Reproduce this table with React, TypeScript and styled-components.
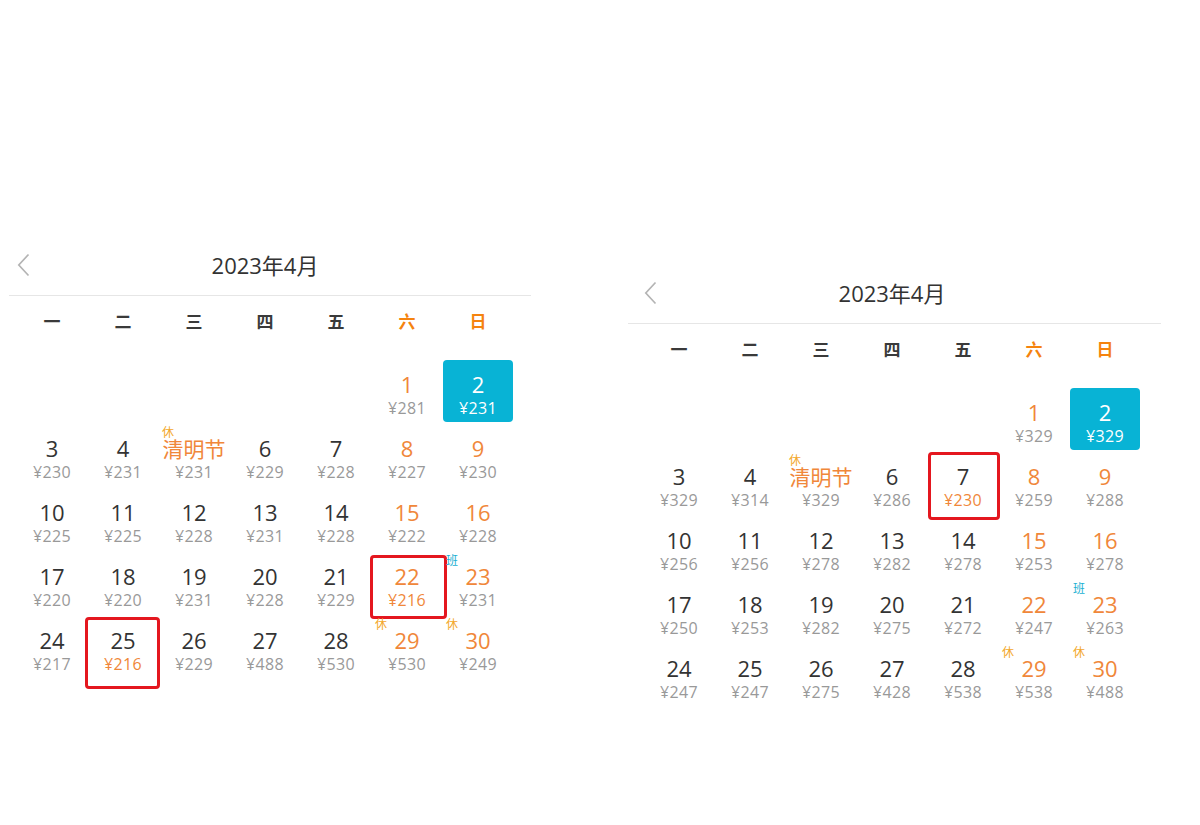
import React from "react";
import styled, { createGlobalStyle } from "styled-components";

const Global = createGlobalStyle`
  html, body { margin: 0; padding: 0; background: #ffffff; }
  body { font-family: "Open Sans", "Noto Sans CJK SC", sans-serif; }
`;

const ORANGE = "#f0873a";
const GRAY = "#999999";
const DARK = "#333333";
const CYAN = "#08b3d5";

type Mark = { top: number; left: number; right: number; bottom: number };
type Day = {
  d?: number;
  label?: string;
  price?: string;
  weekend?: boolean;
  selected?: boolean;
  low?: boolean;
  badge?: "休" | "班";
  mark?: Mark;
};

const Page = styled.div`
  display: flex;
  align-items: flex-start;
  gap: 97px;
  padding: 245px 0 0 9px;
  width: 1200px;
  height: 825px;
  box-sizing: border-box;
`;

const Calendar = styled.section<{ $width: number; $drop: number }>`
  width: ${(p) => p.$width}px;
  margin-top: ${(p) => p.$drop}px;
  display: flex;
  flex-direction: column;
`;

const Header = styled.div<{ $inset: number }>`
  padding: 0 0 10px ${(p) => p.$inset}px;
  border-bottom: 1px solid #e6e6e6;
`;

const HeaderInner = styled.div`
  width: 496px;
  height: 40px;
  display: grid;
  grid-template-columns: 1fr auto 1fr;
  align-items: center;
`;

const Back = styled.svg`
  width: 13px;
  height: 24px;
`;

const Title = styled.div`
  font-size: 22px;
  color: ${DARK};
  line-height: 40px;
`;

const WeekRow = styled.div<{ $inset: number }>`
  padding-left: ${(p) => p.$inset}px;
  display: grid;
  grid-template-columns: repeat(7, 70px);
  column-gap: 1px;
  height: 48px;
  align-items: center;
`;

const WeekLabel = styled.div<{ $weekend?: boolean }>`
  text-align: center;
  font-family: "Noto Sans CJK SC", sans-serif;
  font-weight: 700;
  font-size: 17px;
  color: ${(p) => (p.$weekend ? "#f5830e" : "#3a3a3a")};
`;

const Grid = styled.div<{ $inset: number }>`
  padding: 16px 0 0 ${(p) => p.$inset}px;
  display: grid;
  grid-template-columns: repeat(7, 70px);
  grid-auto-rows: 62px;
  column-gap: 1px;
  row-gap: 2px;
`;

const Cell = styled.div<{ $selected?: boolean }>`
  position: relative;
  display: flex;
  flex-direction: column;
  align-items: center;
  padding-top: 10px;
  box-sizing: border-box;
  border-radius: 4px;
  background: ${(p) => (p.$selected ? CYAN : "transparent")};
`;

const DayNum = styled.div<{ $tone: "dark" | "orange" | "white" }>`
  font-size: 22px;
  line-height: 28px;
  color: ${(p) => (p.$tone === "white" ? "#fff" : p.$tone === "orange" ? ORANGE : DARK)};
`;

const Festival = styled.div`
  font-family: "Noto Sans CJK SC", sans-serif;
  font-size: 21px;
  line-height: 28px;
  color: ${ORANGE};
  white-space: nowrap;
`;

const Price = styled.div<{ $tone: "gray" | "orange" | "white" }>`
  font-size: 16px;
  letter-spacing: 0.4px;
  line-height: 20px;
  color: ${(p) => (p.$tone === "white" ? "#fff" : p.$tone === "orange" ? ORANGE : GRAY)};
`;

const Badge = styled.span<{ $kind: "休" | "班" }>`
  position: absolute;
  top: 1px;
  left: 3px;
  font-family: "Noto Sans CJK SC", sans-serif;
  font-size: 12px;
  line-height: 14px;
  color: ${(p) => (p.$kind === "班" ? "#19b0d2" : "#f3a72a")};
`;

const RedMark = styled.div`
  position: absolute;
  border: 3px solid #e4171f;
  border-radius: 4px;
  pointer-events: none;
`;

const WEEK = ["一", "二", "三", "四", "五", "六", "日"];

function build(prices: string[], mark: Record<number, Mark>, low: number[]): Day[] {
  const cells: Day[] = [{}, {}, {}, {}, {}];
  for (let d = 1; d <= 30; d++) {
    const col = (d + 4) % 7;
    const weekend = col === 5 || col === 6;
    const day: Day = { d, price: "¥" + prices[d - 1], weekend };
    if (d === 2) day.selected = true;
    if (d === 5) {
      day.label = "清明节";
      day.badge = "休";
    }
    if (d === 23) day.badge = "班";
    if (d === 29 || d === 30) day.badge = "休";
    if (low.includes(d)) day.low = true;
    if (mark[d]) day.mark = mark[d];
    cells.push(day);
  }
  return cells;
}

const leftDays = build(
  "281 231 230 231 231 229 228 227 230 225 225 228 231 228 222 228 220 220 231 228 229 216 231 217 216 229 488 530 530 249".split(" "),
  {
    22: { top: 3, left: -2, right: -5, bottom: -5 },
    25: { top: 1, left: -3, right: -2, bottom: -11 },
  },
  [22, 25]
);

const rightDays = build(
  "329 329 329 314 329 286 230 259 288 256 256 278 282 278 253 278 250 253 282 275 272 247 263 247 247 275 428 538 538 488".split(" "),
  {
    7: { top: 0, left: 0, right: -2, bottom: -6 },
  },
  [7]
);

function CalendarView({ days, width, inset, drop }: { days: Day[]; width: number; inset: number; drop: number }) {
  return (
    <Calendar $width={width} $drop={drop}>
      <Header $inset={inset}>
        <HeaderInner>
          <Back viewBox="0 0 13 24">
            <polyline points="11.5,1.5 1.8,12 11.5,22.5" fill="none" stroke="#b4b4b4" strokeWidth="1.7" />
          </Back>
          <Title>2023年4月</Title>
          <span />
        </HeaderInner>
      </Header>
      <WeekRow $inset={inset}>
        {WEEK.map((w, i) => (
          <WeekLabel key={w} $weekend={i >= 5}>
            {w}
          </WeekLabel>
        ))}
      </WeekRow>
      <Grid $inset={inset}>
        {days.map((c, i) =>
          c.d ? (
            <Cell key={i} $selected={c.selected}>
              {c.badge && <Badge $kind={c.badge}>{c.badge}</Badge>}
              {c.label ? (
                <Festival>{c.label}</Festival>
              ) : (
                <DayNum $tone={c.selected ? "white" : c.weekend ? "orange" : "dark"}>{c.d}</DayNum>
              )}
              <Price $tone={c.selected ? "white" : c.low ? "orange" : "gray"}>{c.price}</Price>
              {c.mark && (
                <RedMark
                  style={{ top: c.mark.top, left: c.mark.left, right: c.mark.right, bottom: c.mark.bottom }}
                />
              )}
            </Cell>
          ) : (
            <Cell key={i} />
          )
        )}
      </Grid>
    </Calendar>
  );
}

export default function App() {
  return (
    <>
      <Global />
      <Page>
        <CalendarView days={leftDays} width={522} inset={8} drop={0} />
        <CalendarView days={rightDays} width={533} inset={16} drop={28} />
      </Page>
    </>
  );
}
